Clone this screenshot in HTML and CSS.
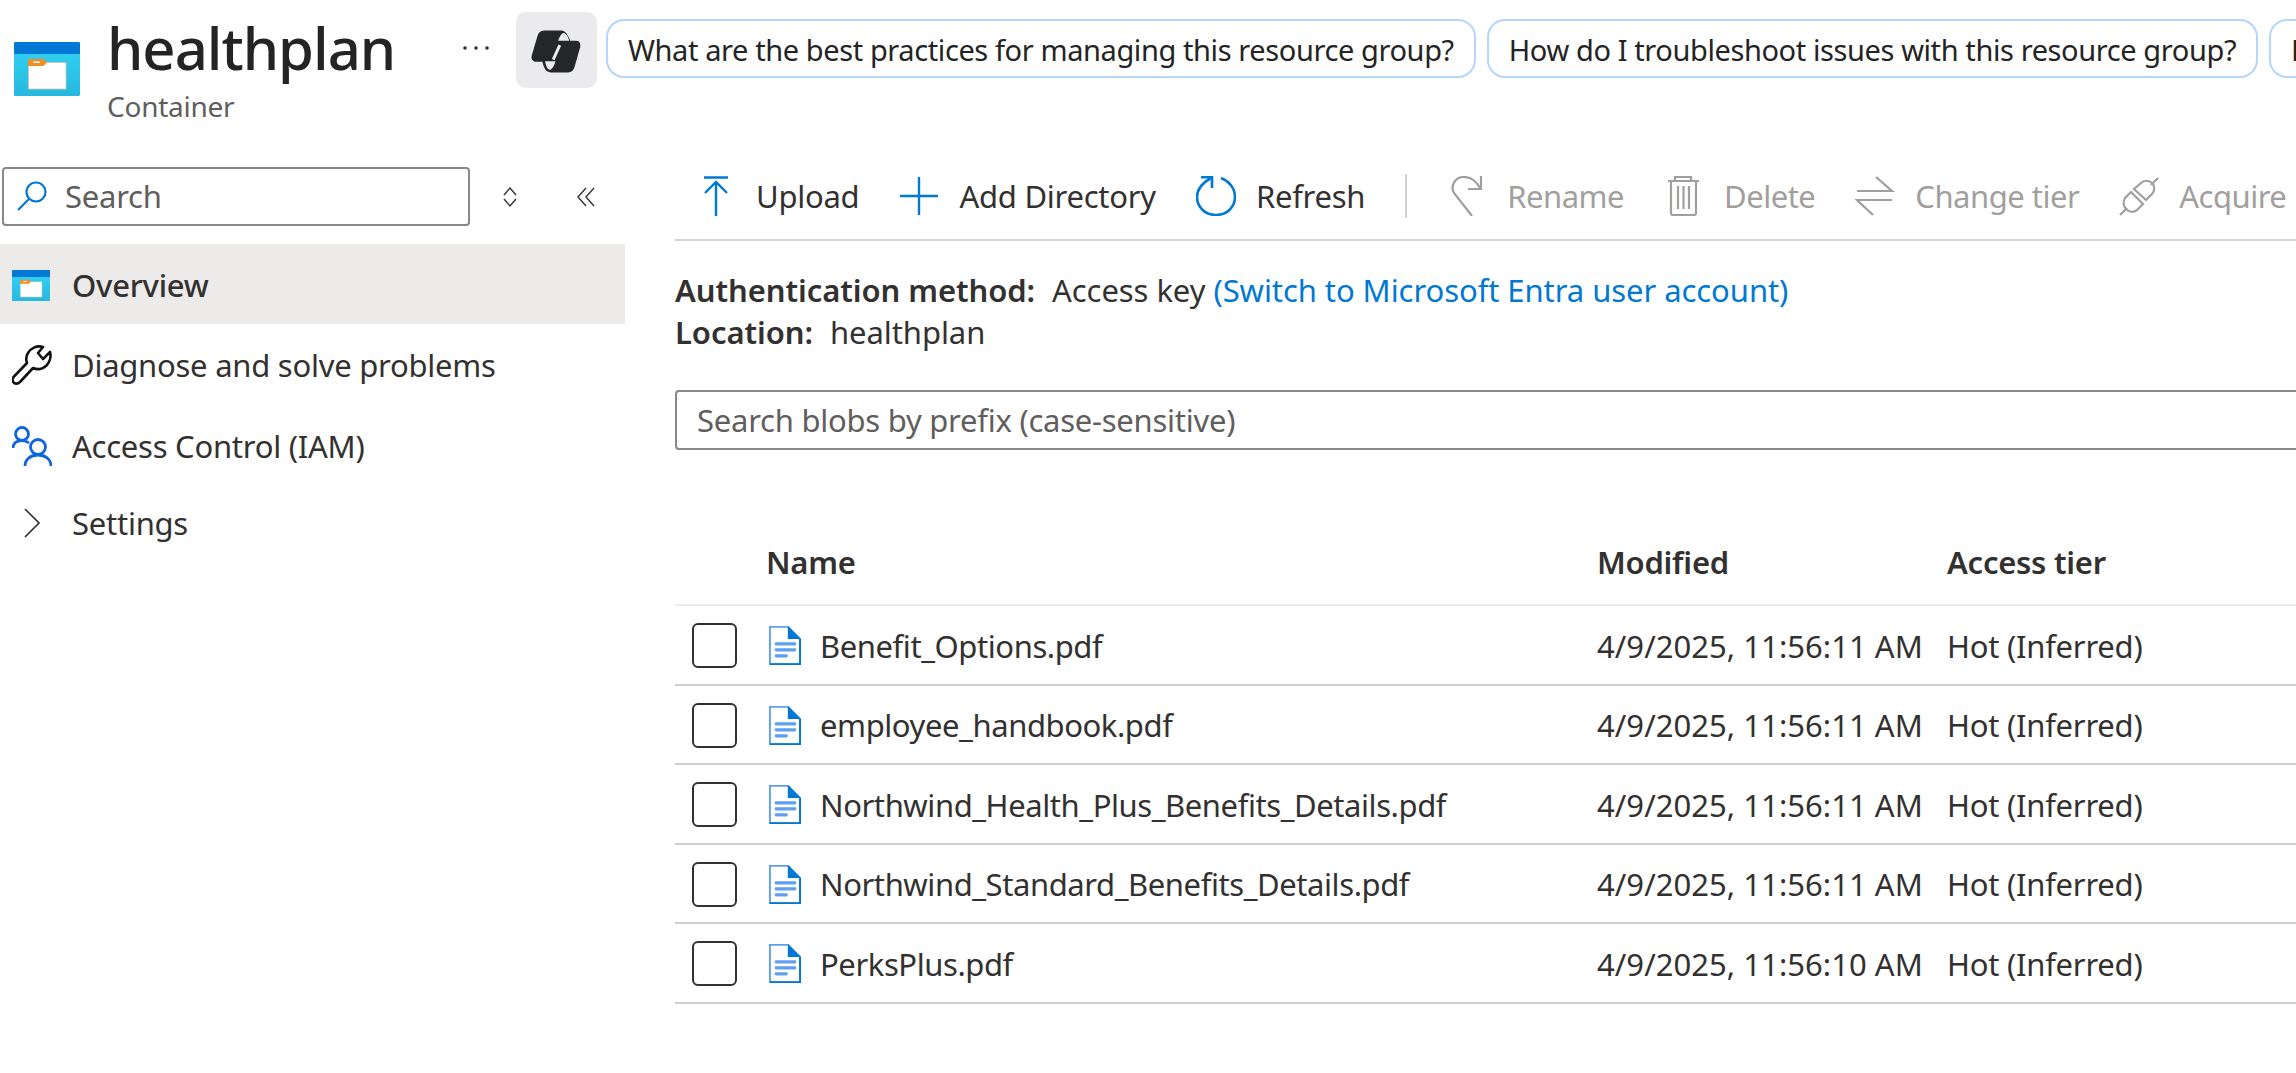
FILE: index.html
```html
<!DOCTYPE html>
<html lang="en">

<head>
    <meta charset="UTF-8">
    <meta name="viewport" content="width=device-width, initial-scale=1.0">
    <title>healthplan - Container</title>
    <link rel="stylesheet" href="styles.css">
</head>

<body>
    <svg class="defs" width="0" height="0">
        <defs>
            <linearGradient id="boxfill" x1="0" y1="0" x2="0" y2="1">
                <stop offset="0" stop-color="#32d4f5" />
                <stop offset="1" stop-color="#26b8de" />
            </linearGradient>
            <symbol id="container" viewBox="0 0 66 54" preserveAspectRatio="none">
                <rect x="0" y="0" width="66" height="54" rx="1.500" fill="url(#boxfill)" />
                <path d="M0 1.500A1.500 1.500 0 0 1 1.500 0H64.500A1.500 1.500 0 0 1 66 1.500V12H0Z" fill="#0078d4" />
                <path d="M14.500 20.500H52V47H14.500Z" fill="#fff" stroke="#c8c6b8" stroke-width="1" />
                <path d="M14 18.500Q14 17 15.500 17H29.500L33 20.500L29.500 24H14Z" fill="#f78d1e" />
                <rect x="19" y="19.500" width="7" height="1.500" fill="#fff" />
            </symbol>
            <symbol id="doc" viewBox="0 0 34 42" preserveAspectRatio="none">
                <path d="M1 1H20.500L33 14V41H1Z" fill="#fff" stroke="#5ea0ef" stroke-width="2" />
                <path d="M20 0L34 14H20Z" fill="#0078d4" />
                <path d="M1 41H33V14" fill="none" stroke="#0078d4" stroke-width="2" />
                <rect x="6" y="17.500" width="23" height="3.400" rx="1.500" fill="#5ea0ef" />
                <rect x="6" y="24" width="23" height="3.400" rx="1.500" fill="#5ea0ef" />
                <rect x="6" y="30.500" width="14" height="3.400" rx="1.500" fill="#5ea0ef" />
            </symbol>
        </defs>
    </svg>

    <header class="page-header">
        <svg class="res-icon"><use href="#container" /></svg>
        <div class="title-block">
            <h1>healthplan</h1>
            <div class="subtitle">Container</div>
        </div>
        <svg class="more" width="28" height="6" viewBox="0 0 28 6" fill="#323130">
            <circle cx="3" cy="3" r="1.800" />
            <circle cx="14" cy="3" r="1.800" />
            <circle cx="25" cy="3" r="1.800" />
        </svg>
        <div class="copilot">
            <svg width="81" height="76" viewBox="0 0 246 228">
                <path d="M85 55H135C150 52 158 70 165 86H182C193 86 197 95 195 105L178 165C175 176 168 182 158 182H105C92 182 85 170 80 150H62C50 150 45 140 48 130L65 72C68 62 75 55 85 55Z" fill="#242629" />
                <path d="M128 86C132 72 139 62 145 62C153 62 158 75 162 86Z" fill="#ebebed" />
                <path d="M88 148H120C116 162 109 174 103 174C95 174 91 160 88 148Z" fill="#ebebed" />
                <path d="M133 99L113 143" stroke="#ebebed" stroke-width="9" />
            </svg>
        </div>
        <div class="pills">
            <span class="pill">What are the best practices for managing this resource group?</span>
            <span class="pill">How do I troubleshoot issues with this resource group?</span>
            <span class="pill">How</span>
        </div>
    </header>

    <div class="layout">
        <nav class="sidebar">
            <div class="side-tools">
                <div class="side-search">
                    <svg width="30" height="30" viewBox="0 0 30 30" fill="none" stroke="#0078d4" stroke-width="2.200">
                        <circle cx="19" cy="11" r="9.500" />
                        <path d="M12 18L1 29" />
                    </svg>
                    <span>Search</span>
                </div>
                <svg class="sort" width="16" height="22" viewBox="0 0 16 22" fill="none" stroke="#323130" stroke-width="1.400">
                    <path d="M2 9L8 2L14 9M2 13L8 20L14 13" />
                </svg>
                <svg class="collapse" width="20" height="20" viewBox="0 0 20 20" fill="none" stroke="#323130" stroke-width="1.400">
                    <path d="M10 1L2 10L10 19M18 1L10 10L18 19" />
                </svg>
            </div>
            <div class="nav-item active">
                <svg class="nav-icon small-res"><use href="#container" /></svg>
                <span>Overview</span>
            </div>
            <div class="nav-item">
                <svg class="nav-icon" width="40" height="40" viewBox="0 0 40 40" fill="none" stroke="#111" stroke-width="2.600" stroke-linejoin="round">
                    <path d="M31 2L26 8L31 14L38 7C40 14 36 22 28 24C25 24.500 23 24 21 23L8 37C5.500 39.500 2 39 1 36.500C0 35 .5 33 2 31.500L15 18C14 15 14 11 16 8C19 3 25 0 31 2Z" />
                </svg>
                <span>Diagnose and solve problems</span>
            </div>
            <div class="nav-item">
                <svg class="nav-icon" width="40" height="40" viewBox="0 0 40 40" fill="none" stroke="#0f65dc" stroke-width="2.800">
                    <circle cx="10" cy="8" r="6.500" />
                    <path d="M1 22C1 17 5 14.500 10 14.500C13 14.500 15 15.500 17 17" />
                    <circle cx="26" cy="21" r="7.500" />
                    <path d="M13 40C13 33 19 29 26 29C33 29 39 33 39 40" />
                </svg>
                <span>Access Control (IAM)</span>
            </div>
            <div class="nav-item settings">
                <svg class="nav-icon" width="40" height="30" viewBox="0 0 40 30" fill="none" stroke="#323130" stroke-width="1.700">
                    <path d="M13 1L27 15L13 29" />
                </svg>
                <span>Settings</span>
            </div>
        </nav>

        <main class="content">
            <div class="toolbar">
                <div class="tool">
                    <svg width="40" height="40" viewBox="0 0 40 40" fill="none" stroke="#0078d4" stroke-width="2.400">
                        <path d="M8 1.500H32M20 40V6M9 17L20 6L31 17" />
                    </svg>
                    <span>Upload</span>
                </div>
                <div class="tool">
                    <svg width="40" height="40" viewBox="0 0 40 40" fill="none" stroke="#0078d4" stroke-width="2.400">
                        <path d="M20 1V39M1 20H39" />
                    </svg>
                    <span>Add Directory</span>
                </div>
                <div class="tool">
                    <svg width="40" height="40" viewBox="0 0 40 40" fill="none" stroke="#0078d4" stroke-width="2.600">
                        <path d="M25 2C33 5 39 12 39 21C39 31 31 39 20 39C9 39 1 31 1 21C1 13 6 7 15 2" />
                        <path d="M5 1.300H16V12" />
                    </svg>
                    <span>Refresh</span>
                </div>
                <div class="tool-sep"></div>
                <div class="tool off">
                    <svg width="40" height="40" viewBox="-4 0 40 40" fill="none" stroke="#a19f9d" stroke-width="2.200">
                        <path d="M21 40L3 17C-1 10 4 1 13 1C20 1 25 5 29 12M30 0V13H17" />
                    </svg>
                    <span>Rename</span>
                </div>
                <div class="tool off">
                    <svg width="40" height="40" viewBox="-4 0 40 40" fill="none" stroke="#a19f9d" stroke-width="2.200">
                        <path d="M0 5H31M7 5V1H23V5M3 5V37Q3 39 5 39H26Q28 39 28 37V5M10 10V33M15.500 10V33M21 10V33" />
                    </svg>
                    <span>Delete</span>
                </div>
                <div class="tool off">
                    <svg width="40" height="40" viewBox="-1 0 40 40" fill="none" stroke="#a19f9d" stroke-width="2.200">
                        <path d="M1 15H36L20 1M36 24H1L17 39" />
                    </svg>
                    <span>Change tier</span>
                </div>
                <div class="tool off">
                    <svg width="40" height="40" viewBox="0 0 40 40" fill="none" stroke="#a19f9d" stroke-width="2.200">
                        <path d="M39 2L32 9M1 39L8 32" />
                        <path d="M15 13L22 7C25 4 30 4 33 7C36 10 36 15 33 18L27 24Z" />
                        <path d="M12 16L24 28L18 34C15 37 10 36 7 33C4 30 4 25 6 22Z" />
                    </svg>
                    <span>Acquire</span>
                </div>
            </div>

            <div class="info">
                <div><b>Authentication method:</b> Access key <a href="#">(Switch to Microsoft Entra user account)</a></div>
                <div><b>Location:</b> healthplan</div>
            </div>

            <div class="blob-search">Search blobs by prefix (case-sensitive)</div>

            <div class="blob-table">
                <div class="blob-row head">
                    <span></span>
                    <span>Name</span>
                    <span>Modified</span>
                    <span>Access tier</span>
                </div>
                <div class="blob-row">
                    <span class="check"></span>
                    <span class="file"><svg class="doc"><use href="#doc" /></svg>Benefit_Options.pdf</span>
                    <span class="date">4/9/2025, 11:56:11 AM</span>
                    <span>Hot (Inferred)</span>
                </div>
                <div class="blob-row">
                    <span class="check"></span>
                    <span class="file"><svg class="doc"><use href="#doc" /></svg>employee_handbook.pdf</span>
                    <span class="date">4/9/2025, 11:56:11 AM</span>
                    <span>Hot (Inferred)</span>
                </div>
                <div class="blob-row">
                    <span class="check"></span>
                    <span class="file"><svg class="doc"><use href="#doc" /></svg>Northwind_Health_Plus_Benefits_Details.pdf</span>
                    <span class="date">4/9/2025, 11:56:11 AM</span>
                    <span>Hot (Inferred)</span>
                </div>
                <div class="blob-row">
                    <span class="check"></span>
                    <span class="file"><svg class="doc"><use href="#doc" /></svg>Northwind_Standard_Benefits_Details.pdf</span>
                    <span class="date">4/9/2025, 11:56:11 AM</span>
                    <span>Hot (Inferred)</span>
                </div>
                <div class="blob-row">
                    <span class="check"></span>
                    <span class="file"><svg class="doc"><use href="#doc" /></svg>PerksPlus.pdf</span>
                    <span class="date">4/9/2025, 11:56:10 AM</span>
                    <span>Hot (Inferred)</span>
                </div>
            </div>
        </main>
    </div>
</body>

</html>
```

FILE: styles.css
```css
html,
body {
    margin: 0;
    padding: 0;
    height: 1073px;
    overflow: hidden;
    background: #fff;
}

body {
    font-family: "Noto Sans", "Open Sans", sans-serif;
    font-size: 31px;
    letter-spacing: -0.25px;
    color: #323130;
}

.defs {
    display: block;
    height: 0;
}

.page-header {
    display: flex;
    height: 152px;
    align-items: flex-start;
    white-space: nowrap;
}

.res-icon {
    width: 66px;
    height: 54px;
    margin: 42px 0 0 14px;
    flex: none;
}

.title-block {
    width: 355px;
    margin-left: 27px;
    flex: none;
}

h1 {
    margin: 11px 0 0;
    font-size: 58px;
    line-height: 74px;
    font-weight: 500;
    letter-spacing: -1px;
    color: #242424;
}

.subtitle {
    margin-top: 4px;
    font-size: 28px;
    line-height: 34px;
    color: #605e5c;
}

.more {
    margin: 45px 26px 0 0;
    flex: none;
}

.copilot {
    width: 81px;
    height: 76px;
    margin: 12px 9px 0 0;
    border-radius: 10px;
    background: #ebebed;
    flex: none;
}

.copilot svg {
    display: block;
}

.pills {
    display: flex;
    gap: 11px;
    margin-top: 19px;
}

.pill {
    display: block;
    height: 59px;
    padding: 0 20px;
    border: 2px solid #b4d6fa;
    border-radius: 18px;
    box-sizing: border-box;
    font-size: 29px;
    letter-spacing: -0.4px;
    line-height: 57px;
    color: #242424;
    flex: none;
}

.layout {
    display: flex;
    white-space: nowrap;
}

.sidebar {
    width: 625px;
    padding-top: 15px;
    flex: none;
}

.side-tools {
    display: flex;
    align-items: center;
    margin-bottom: 18px;
}

.side-search {
    display: flex;
    align-items: center;
    gap: 18px;
    width: 468px;
    height: 59px;
    margin-left: 2px;
    padding: 0 0 2px 13px;
    border: 2px solid #8a8886;
    border-radius: 4px;
    box-sizing: border-box;
    color: #605e5c;
}

.sort {
    margin-left: 32px;
}

.collapse {
    margin-left: 58px;
}

.nav-item {
    display: flex;
    align-items: center;
    height: 80px;
    margin-bottom: 1px;
    padding-left: 12px;
    gap: 20px;
}

.nav-item.active {
    background: #edebe9;
    font-weight: 500;
    box-sizing: border-box;
    padding-top: 2px;
}

.nav-item.settings {
    height: 72px;
}

.nav-icon {
    flex: none;
}

.small-res {
    width: 38px;
    height: 31px;
    margin-right: 2px;
}

.content {
    flex: 1;
    min-width: 0;
    margin-left: 50px;
    overflow: hidden;
}

.toolbar {
    display: flex;
    align-items: center;
    height: 87px;
    padding-left: 21px;
    gap: 40px;
    border-bottom: 2px solid #d6d6d6;
}

.tool {
    display: flex;
    align-items: center;
    gap: 20px;
    flex: none;
}

.tool.off {
    color: #a19f9d;
    letter-spacing: -0.5px;
}

.tool-sep {
    width: 2px;
    height: 44px;
    background: #d2d0ce;
    flex: none;
}

.info {
    margin-top: 28px;
    line-height: 42px;
    letter-spacing: -0.07px;
}

.info b {
    font-weight: 600;
    margin-right: 9px;
}

.info a {
    color: #0078d4;
    text-decoration: none;
}

.blob-search {
    height: 60px;
    margin-top: 37px;
    padding-left: 20px;
    border: 2px solid #8a8886;
    border-right: 0;
    border-radius: 4px 0 0 4px;
    box-sizing: border-box;
    line-height: 56px;
    color: #605e5c;
}

.blob-table {
    margin-top: 71px;
}

.blob-row {
    display: grid;
    grid-template-columns: 91px 831px 350px 1fr;
    align-items: center;
    height: 79.500px;
    padding-top: 2px;
    box-sizing: border-box;
    border-bottom: 2px solid #cfcfcf;
}

.blob-row.head {
    height: 85px;
    padding: 0 0 2px;
    border-bottom-color: #ebebeb;
    font-weight: 600;
    color: #323130;
}

.date {
    letter-spacing: 0.05px;
}

.check {
    display: block;
    width: 45px;
    height: 45px;
    margin-left: 17px;
    border: 2px solid #323130;
    border-radius: 6px;
    box-sizing: border-box;
}

.file {
    display: flex;
    align-items: center;
    gap: 19px;
    letter-spacing: -0.42px;
}

.doc {
    width: 32px;
    height: 39px;
    margin-left: 3px;
    flex: none;
}
```
